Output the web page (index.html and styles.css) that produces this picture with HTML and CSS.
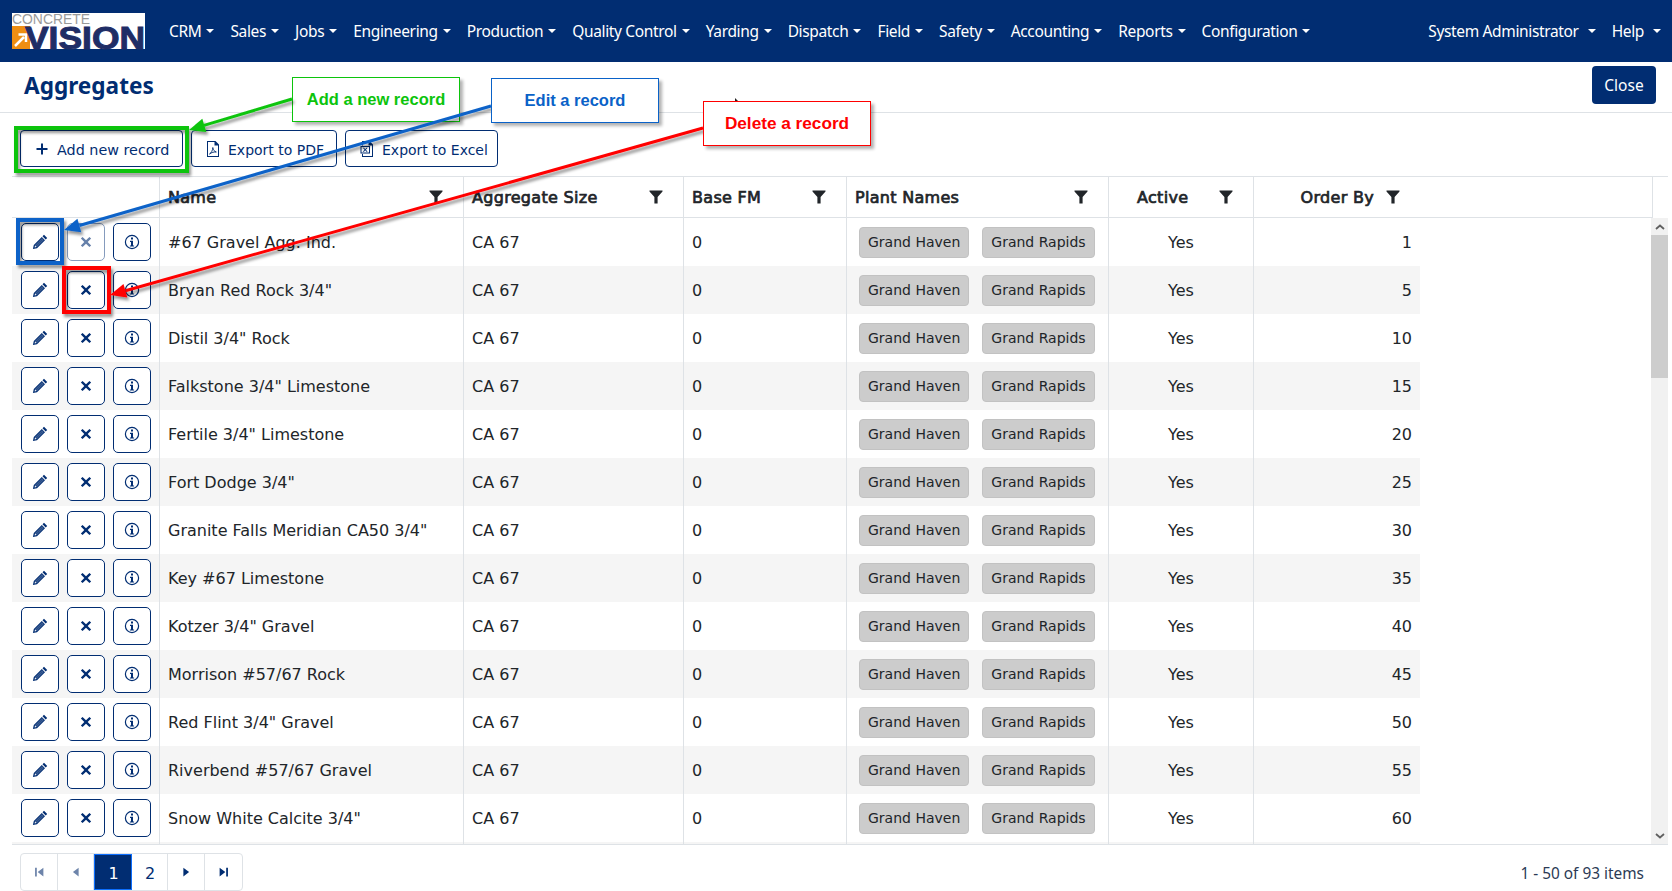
FILE: index.html
```html
<!DOCTYPE html>
<html lang="en">
<head>
<meta charset="utf-8">
<title>Aggregates</title>
<link rel="stylesheet" href="styles.css">
</head>
<body>
<svg class="defs" width="0" height="0" aria-hidden="true">
  <symbol id="i-pencil" viewBox="0 0 16 16"><path d="M12 .8 15.200 4 13.700 5.500 10.500 2.300zM9.800 3 13 6.200 5 14.200 .9 15.100 1.800 11zM3 11.500l-.4 1.900 1.900-.4 7-7-1.500-1.500z" fill-rule="evenodd"/><path d="M3 11.500 10 4.500 11.500 6 4.500 13z" opacity=".85"/></symbol>
  <symbol id="i-x" viewBox=".5 .5 15 15"><path d="M3.700 1.600 8 5.900l4.300-4.300 2.100 2.100L10.100 8l4.300 4.300-2.100 2.100L8 10.100l-4.300 4.300-2.100-2.100L5.900 8 1.600 3.700z"/></symbol>
  <symbol id="i-info" viewBox="0 0 16 16"><path d="M8 .8a7.200 7.200 0 1 0 0 14.400A7.200 7.200 0 0 0 8 .8zm0 1.200a6 6 0 1 1 0 12A6 6 0 0 1 8 2z" fill-rule="evenodd"/><path d="M7 3.600h2v2H7zM6 6.800h3v4.600h1.100v1.100H5.900v-1.100H7V7.900H6z"/></symbol>
  <symbol id="i-filter" viewBox="0 0 16 16"><path d="M1.500 1.500h13v1L9.600 8v6.500H6.400V8L1.500 2.500z"/></symbol>
  <symbol id="i-plus" viewBox="0 0 16 16"><path d="M7 2.500h2V7h4.500v2H9v4.500H7V9H2.500V7H7z"/></symbol>
  <symbol id="i-pdf" viewBox="0 0 16 16"><path d="M2 0h8.500L14 3.500V16H2zm1 1v14h10V4.500H9.500V1z" fill-rule="evenodd"/><path d="M4.500 13c1.500-.8 3.300-3.500 3.300-6.500.3 2.400 1.600 4 3.500 4.500-2.300-.2-4.600.4-6.800 2z" fill="none" stroke="currentColor" stroke-width=".9"/></symbol>
  <symbol id="i-xls" viewBox="0 0 16 16"><path d="M3 0h7.500L14 3.500V16H3v-3h1v2h9V4.500H9.500V1H4v3.500H3z" fill-rule="evenodd"/><path d="M2 5.500h8.500v6.500H2z" fill="#fff"/><path d="M1.500 5h9.500v7.500H1.500zm1 1v5.500h7.500V6z" fill-rule="evenodd"/><path d="M3.800 6.800h1.300l1.100 1.500 1.100-1.500h1.300L6.900 8.800l1.800 2H7.400L6.200 9.300 5 10.800H3.700l1.800-2z"/></symbol>
  <symbol id="i-first" viewBox="0 0 16 16"><path d="M3.500 3h2v10h-2zM13 3v10L6.500 8z"/></symbol>
  <symbol id="i-prev" viewBox="0 0 16 16"><path d="M11 3v10L4.500 8z"/></symbol>
  <symbol id="i-next" viewBox="0 0 16 16"><path d="M5 3v10l6.500-5z"/></symbol>
  <symbol id="i-last" viewBox="0 0 16 16"><path d="M10.500 3h2v10h-2zM3 3v10l6.500-5z"/></symbol>
</svg>

<nav class="navbar">
  <svg class="logo" viewBox="0 0 133 36" width="133" height="36" role="img" aria-label="Concrete Vision">
    <rect width="133" height="36" fill="#fff"/>
    <rect x="0" y="13" width="18" height="23" fill="#ee8e12"/>
    <path d="M3 33 12 24M6.500 21.500H14V29" fill="none" stroke="#fff" stroke-width="2.500"/>
    <text x="0" y="10.500" class="logo-top" textLength="78" lengthAdjust="spacingAndGlyphs">CONCRETE</text>
    <text x="13" y="35.500" class="logo-main" textLength="120" lengthAdjust="spacingAndGlyphs">VISION</text>
  </svg>
  <ul class="menu">
    <li class="menu-item">CRM</li>
    <li class="menu-item">Sales</li>
    <li class="menu-item">Jobs</li>
    <li class="menu-item">Engineering</li>
    <li class="menu-item">Production</li>
    <li class="menu-item">Quality Control</li>
    <li class="menu-item">Yarding</li>
    <li class="menu-item">Dispatch</li>
    <li class="menu-item">Field</li>
    <li class="menu-item">Safety</li>
    <li class="menu-item">Accounting</li>
    <li class="menu-item">Reports</li>
    <li class="menu-item">Configuration</li>
  </ul>
  <ul class="menu menu-right">
    <li class="menu-item menu-item-wide">System Administrator</li>
    <li class="menu-item menu-item-wide">Help</li>
  </ul>
</nav>

<header class="titlebar">
  <h1 class="page-title">Aggregates</h1>
  <button class="close-btn">Close</button>
</header>

<div class="toolbar">
  <button class="tool-btn tool-add"><svg class="ico-16"><use href="#i-plus"/></svg><span class="btn-label">Add new record</span></button>
  <button class="tool-btn tool-pdf"><svg class="ico-16"><use href="#i-pdf"/></svg><span class="btn-label">Export to PDF</span></button>
  <button class="tool-btn tool-xls"><svg class="ico-16"><use href="#i-xls"/></svg><span class="btn-label">Export to Excel</span></button>
</div>

<section class="grid">
  <table class="head-table">
    <colgroup><col class="c1"><col class="c2"><col class="c3"><col class="c4"><col class="c5"><col class="c6"><col class="c7"><col class="c8"></colgroup>
    <thead>
      <tr>
        <th></th>
        <th><div class="th-inner"><span>Name</span><svg class="ico-filter"><use href="#i-filter"/></svg></div></th>
        <th><div class="th-inner"><span>Aggregate Size</span><svg class="ico-filter"><use href="#i-filter"/></svg></div></th>
        <th><div class="th-inner"><span>Base FM</span><svg class="ico-filter"><use href="#i-filter"/></svg></div></th>
        <th><div class="th-inner"><span>Plant Names</span><svg class="ico-filter"><use href="#i-filter"/></svg></div></th>
        <th><div class="th-inner th-active"><span>Active</span><svg class="ico-filter"><use href="#i-filter"/></svg></div></th>
        <th><div class="th-inner th-order"><span>Order By</span><svg class="ico-filter"><use href="#i-filter"/></svg></div></th>
        <th></th>
      </tr>
    </thead>
  </table>
  <div class="grid-body">
    <div class="rows">
      <table class="body-table">
        <colgroup><col class="c1"><col class="c2"><col class="c3"><col class="c4"><col class="c5"><col class="c6"><col class="c7"></colgroup>
        <tbody>
          <tr><td class="acts"><button class="act"><svg class="ico-16"><use href="#i-pencil"/></svg></button><button class="act act-faded"><svg class="ico-12"><use href="#i-x"/></svg></button><button class="act"><svg class="ico-16"><use href="#i-info"/></svg></button></td><td>#67 Gravel Agg. Ind.</td><td>CA 67</td><td>0</td><td><span class="chip">Grand Haven</span><span class="chip">Grand Rapids</span></td><td class="ctr">Yes</td><td class="num">1</td></tr>
          <tr><td class="acts"><button class="act"><svg class="ico-16"><use href="#i-pencil"/></svg></button><button class="act"><svg class="ico-12"><use href="#i-x"/></svg></button><button class="act"><svg class="ico-16"><use href="#i-info"/></svg></button></td><td>Bryan Red Rock 3/4"</td><td>CA 67</td><td>0</td><td><span class="chip">Grand Haven</span><span class="chip">Grand Rapids</span></td><td class="ctr">Yes</td><td class="num">5</td></tr>
          <tr><td class="acts"><button class="act"><svg class="ico-16"><use href="#i-pencil"/></svg></button><button class="act"><svg class="ico-12"><use href="#i-x"/></svg></button><button class="act"><svg class="ico-16"><use href="#i-info"/></svg></button></td><td>Distil 3/4" Rock</td><td>CA 67</td><td>0</td><td><span class="chip">Grand Haven</span><span class="chip">Grand Rapids</span></td><td class="ctr">Yes</td><td class="num">10</td></tr>
          <tr><td class="acts"><button class="act"><svg class="ico-16"><use href="#i-pencil"/></svg></button><button class="act"><svg class="ico-12"><use href="#i-x"/></svg></button><button class="act"><svg class="ico-16"><use href="#i-info"/></svg></button></td><td>Falkstone 3/4" Limestone</td><td>CA 67</td><td>0</td><td><span class="chip">Grand Haven</span><span class="chip">Grand Rapids</span></td><td class="ctr">Yes</td><td class="num">15</td></tr>
          <tr><td class="acts"><button class="act"><svg class="ico-16"><use href="#i-pencil"/></svg></button><button class="act"><svg class="ico-12"><use href="#i-x"/></svg></button><button class="act"><svg class="ico-16"><use href="#i-info"/></svg></button></td><td>Fertile 3/4" Limestone</td><td>CA 67</td><td>0</td><td><span class="chip">Grand Haven</span><span class="chip">Grand Rapids</span></td><td class="ctr">Yes</td><td class="num">20</td></tr>
          <tr><td class="acts"><button class="act"><svg class="ico-16"><use href="#i-pencil"/></svg></button><button class="act"><svg class="ico-12"><use href="#i-x"/></svg></button><button class="act"><svg class="ico-16"><use href="#i-info"/></svg></button></td><td>Fort Dodge 3/4"</td><td>CA 67</td><td>0</td><td><span class="chip">Grand Haven</span><span class="chip">Grand Rapids</span></td><td class="ctr">Yes</td><td class="num">25</td></tr>
          <tr><td class="acts"><button class="act"><svg class="ico-16"><use href="#i-pencil"/></svg></button><button class="act"><svg class="ico-12"><use href="#i-x"/></svg></button><button class="act"><svg class="ico-16"><use href="#i-info"/></svg></button></td><td>Granite Falls Meridian CA50 3/4"</td><td>CA 67</td><td>0</td><td><span class="chip">Grand Haven</span><span class="chip">Grand Rapids</span></td><td class="ctr">Yes</td><td class="num">30</td></tr>
          <tr><td class="acts"><button class="act"><svg class="ico-16"><use href="#i-pencil"/></svg></button><button class="act"><svg class="ico-12"><use href="#i-x"/></svg></button><button class="act"><svg class="ico-16"><use href="#i-info"/></svg></button></td><td>Key #67 Limestone</td><td>CA 67</td><td>0</td><td><span class="chip">Grand Haven</span><span class="chip">Grand Rapids</span></td><td class="ctr">Yes</td><td class="num">35</td></tr>
          <tr><td class="acts"><button class="act"><svg class="ico-16"><use href="#i-pencil"/></svg></button><button class="act"><svg class="ico-12"><use href="#i-x"/></svg></button><button class="act"><svg class="ico-16"><use href="#i-info"/></svg></button></td><td>Kotzer 3/4" Gravel</td><td>CA 67</td><td>0</td><td><span class="chip">Grand Haven</span><span class="chip">Grand Rapids</span></td><td class="ctr">Yes</td><td class="num">40</td></tr>
          <tr><td class="acts"><button class="act"><svg class="ico-16"><use href="#i-pencil"/></svg></button><button class="act"><svg class="ico-12"><use href="#i-x"/></svg></button><button class="act"><svg class="ico-16"><use href="#i-info"/></svg></button></td><td>Morrison #57/67 Rock</td><td>CA 67</td><td>0</td><td><span class="chip">Grand Haven</span><span class="chip">Grand Rapids</span></td><td class="ctr">Yes</td><td class="num">45</td></tr>
          <tr><td class="acts"><button class="act"><svg class="ico-16"><use href="#i-pencil"/></svg></button><button class="act"><svg class="ico-12"><use href="#i-x"/></svg></button><button class="act"><svg class="ico-16"><use href="#i-info"/></svg></button></td><td>Red Flint 3/4" Gravel</td><td>CA 67</td><td>0</td><td><span class="chip">Grand Haven</span><span class="chip">Grand Rapids</span></td><td class="ctr">Yes</td><td class="num">50</td></tr>
          <tr><td class="acts"><button class="act"><svg class="ico-16"><use href="#i-pencil"/></svg></button><button class="act"><svg class="ico-12"><use href="#i-x"/></svg></button><button class="act"><svg class="ico-16"><use href="#i-info"/></svg></button></td><td>Riverbend #57/67 Gravel</td><td>CA 67</td><td>0</td><td><span class="chip">Grand Haven</span><span class="chip">Grand Rapids</span></td><td class="ctr">Yes</td><td class="num">55</td></tr>
          <tr><td class="acts"><button class="act"><svg class="ico-16"><use href="#i-pencil"/></svg></button><button class="act"><svg class="ico-12"><use href="#i-x"/></svg></button><button class="act"><svg class="ico-16"><use href="#i-info"/></svg></button></td><td>Snow White Calcite 3/4"</td><td>CA 67</td><td>0</td><td><span class="chip">Grand Haven</span><span class="chip">Grand Rapids</span></td><td class="ctr">Yes</td><td class="num">60</td></tr>
          <tr class="row-cut"><td></td><td></td><td></td><td></td><td></td><td></td><td></td></tr>
        </tbody>
      </table>
    </div>
    <div class="scrollbar">
      <span class="sb-btn"><svg viewBox="0 0 10 6" width="10" height="6"><path d="M1 5 5 1.500 9 5" fill="none" stroke="#606060" stroke-width="1.800"/></svg></span>
      <span class="sb-thumb"></span>
      <span class="sb-space"></span>
      <span class="sb-btn"><svg viewBox="0 0 10 6" width="10" height="6"><path d="M1 1 5 4.500 9 1" fill="none" stroke="#606060" stroke-width="1.800"/></svg></span>
    </div>
  </div>
  <footer class="pager-row">
    <div class="pager">
      <span class="pg pg-off"><svg class="ico-14"><use href="#i-first"/></svg></span>
      <span class="pg pg-off"><svg class="ico-14"><use href="#i-prev"/></svg></span>
      <span class="pg pg-on"><span class="pg-num">1</span></span>
      <span class="pg"><span class="pg-num">2</span></span>
      <span class="pg"><svg class="ico-14"><use href="#i-next"/></svg></span>
      <span class="pg"><svg class="ico-14"><use href="#i-last"/></svg></span>
    </div>
    <div class="pager-info">1 - 50 of 93 items</div>
  </footer>
</section>

<div class="note note-green">Add a new record</div>
<svg class="overlay" viewBox="0 0 1672 891" width="1672" height="891" aria-hidden="true">
  <defs>
    <filter id="sh" x="-5%" y="-5%" width="110%" height="110%"><feDropShadow dx="2" dy="3" stdDeviation="1.500" flood-color="#000" flood-opacity=".42"/></filter>
  </defs>
  <path d="M735 98v4h4z" fill="#222"/>
  <g filter="url(#sh)">
    <rect x="16" y="128" width="171" height="43" fill="none" stroke="#0cc40c" stroke-width="4"/>
    <path d="M292 99 204 125.400" stroke="#0cc40c" stroke-width="3" fill="none"/>
    <path d="M189 130 202.300 118.700 206.300 132.100z" fill="#0cc40c"/>
    <rect x="18" y="220" width="44" height="43" fill="none" stroke="#0a62c8" stroke-width="4"/>
    <path d="M491 106 79.400 225.500" stroke="#0a62c8" stroke-width="3" fill="none"/>
    <path d="M64 230 77.400 218.800 81.300 232.200z" fill="#0a62c8"/>
    <rect x="64" y="268" width="45" height="44" fill="none" stroke="#f00" stroke-width="4"/>
    <path d="M703 128 125.400 290.700" stroke="#f00" stroke-width="3" fill="none"/>
    <path d="M110 295 123.500 284 127.300 297.400z" fill="#f00"/>
  </g>
</svg>
<div class="note note-blue">Edit a record</div>
<div class="note note-red">Delete a record</div>
</body>
</html>
```
FILE: styles.css
```css
* { box-sizing: border-box; }
html, body { margin: 0; padding: 0; }
body {
  width: 1672px;
  height: 891px;
  overflow: hidden;
  position: relative;
  display: flex;
  flex-direction: column;
  background: #fff;
  color: #212529;
  font-family: "DejaVu Sans", sans-serif;
  font-size: 16px;
}
.defs { position: absolute; }
svg { fill: currentColor; }

/* navbar */
.navbar {
  height: 62px;
  flex: none;
  display: flex;
  align-items: center;
  background: #012d72;
  color: #fff;
  padding-left: 12px;
  font-family: "Noto Sans", sans-serif;
  font-size: 15.5px;
  letter-spacing: -.35px;
}
.logo { flex: none; display: block; margin-right: 24px; margin-top: -1px; overflow: visible; }
.logo-top { font: 400 14px "Liberation Sans", sans-serif; letter-spacing: 0; fill: #9a9a9a; }
.logo-main { font: 700 32px "Liberation Sans", sans-serif; letter-spacing: 0; fill: #1f2d66; stroke: #1f2d66; stroke-width: 1px; }
.menu { list-style: none; display: flex; margin: 0; padding: 0; gap: 16px; }
.menu-right { margin-left: auto; padding-right: 11px; gap: 16px; }
.menu-item { display: flex; align-items: center; white-space: nowrap; }
.menu-item::after {
  content: "";
  margin-left: 5px;
  border-top: 4.500px solid #fff;
  border-left: 4.500px solid transparent;
  border-right: 4.500px solid transparent;
}
.menu-item-wide::after { margin-left: 9px; }

/* title */
.titlebar {
  height: 51px;
  flex: none;
  display: flex;
  align-items: center;
  justify-content: space-between;
  border-bottom: 1px solid #dee2e6;
  padding: 0 16px 4px 24px;
}
.page-title {
  margin: 0;
  font: 700 22.600px "Noto Sans", sans-serif;
  color: #012d72;
}
.close-btn {
  width: 64px;
  height: 38px;
  border: 0;
  border-radius: 4px;
  background: #012d72;
  color: #fff;
  font: 400 15.500px "Noto Sans", sans-serif;
  padding: 0;
}

/* toolbar */
.toolbar {
  height: 63px;
  flex: none;
  display: flex;
  gap: 8px;
  padding: 17px 0 0 20px;
}
.tool-btn {
  height: 37px;
  display: flex;
  align-items: center;
  gap: 7px;
  background: #fff;
  border: 1px solid #012d72;
  border-radius: 4px;
  color: #012d72;
  font: 400 14px "DejaVu Sans", sans-serif;
  padding: 0 0 0 13px;
  white-space: nowrap;
}
.btn-label { padding-top: 3px; }
.tool-add { width: 163px; font-size: 14.350px; }
.tool-pdf { width: 146px; }
.tool-xls { width: 153px; }
.ico-16 { width: 16px; height: 16px; flex: none; display: block; }
.ico-14 { width: 14px; height: 14px; flex: none; display: block; }
.ico-12 { width: 12px; height: 12px; flex: none; display: block; }

/* grid */
.grid {
  margin: 0 4px 0 12px;
  border-top: 1px solid #dee2e6;
  flex: 1;
  display: flex;
  flex-direction: column;
  min-height: 0;
}
table { border-collapse: separate; border-spacing: 0; table-layout: fixed; }
.c1 { width: 148px; }
.c2 { width: 304px; }
.c3 { width: 220px; }
.c4 { width: 163px; }
.c5 { width: 262px; }
.c6 { width: 145px; }
.c7 { width: 166px; }
.c8 { width: 233px; }
.head-table { width: 1641px; }
.body-table { width: 1408px; }
.head-table th {
  height: 41px;
  padding: 0 8px;
  border-bottom: 1px solid #dee2e6;
  border-right: 1px solid #dee2e6;
  font-weight: 400;
  font-size: 16px;
  letter-spacing: .3px;
  text-align: left;
  -webkit-text-stroke: .7px #212529;
}
.head-table th:nth-child(7) { border-right: 0; }
.th-inner { display: flex; align-items: center; justify-content: space-between; padding-right: 11px; }
.th-active { padding-left: 20px; }
.th-order { justify-content: flex-end; gap: 11px; padding-right: 11px; }
.ico-filter { width: 16px; height: 16px; flex: none; color: #212529; }
.grid-body { height: 626px; flex: none; display: flex; overflow: hidden; }
.rows { width: 1639px; overflow: hidden; }
.body-table td {
  height: 48px;
  padding: 0 8px;
  border-right: 1px solid #dee2e6;
  white-space: nowrap;
}
.body-table td:last-child { border-right: 0; }
.body-table tr:nth-child(even) td { background: #f5f5f5; }
.acts { font-size: 0; }
.body-table td.acts { padding: 0 0 0 9px; }
.act {
  width: 38px;
  height: 38px;
  display: inline-flex;
  align-items: center;
  justify-content: center;
  margin-right: 8px;
  padding: 0;
  background: #fff;
  border: 1px solid #012d72;
  border-radius: 5px;
  color: #012d72;
  vertical-align: middle;
}
.act-faded { opacity: .6; border-color: #355a92; }
.chip {
  display: inline-block;
  height: 31px;
  line-height: 29px;
  margin: 0 9px 0 4px;
  padding: 0 8px;
  background: #ccc;
  border: 1px solid #c2c2c2;
  border-radius: 4px;
  font-size: 14px;
  vertical-align: middle;
}
.ctr { text-align: center; }
.num { text-align: right; }
.scrollbar {
  width: 17px;
  flex: none;
  display: flex;
  flex-direction: column;
  background: #f1f1f1;
}
.sb-btn { height: 17px; flex: none; display: flex; align-items: center; justify-content: center; }
.sb-thumb { height: 143px; flex: none; background: #cdcdcd; }
.sb-space { flex: 1; }
.pager-row {
  flex: 1;
  display: flex;
  justify-content: space-between;
  align-items: flex-start;
  border-top: 1px solid #dee2e6;
  padding: 8px 24px 0 8px;
}
.pager {
  display: flex;
  height: 38px;
  border: 1px solid #dee2e6;
  border-radius: 4px;
  overflow: hidden;
}
.pg {
  width: 37px;
  display: flex;
  align-items: center;
  justify-content: center;
  color: #012d72;
  border-right: 1px solid #dee2e6;
}
.pg:nth-child(2), .pg:nth-child(4) { width: 36px; }
.pg:last-child { border-right: 0; }
.pg-off { color: #6d84aa; }
.pg.pg-on { width: 38px; background: #012d72; color: #fff; border: 1px solid #0d6efd; }
.pg-num { padding-top: 2px; padding-left: 1px; }
.pager-info { font: 400 15.400px "Noto Sans", sans-serif; line-height: 38px; padding-top: 2px; color: #2b3a55; }

/* annotations */
.overlay { position: absolute; left: 0; top: 0; z-index: 2; pointer-events: none; }
.note {
  position: absolute;
  width: 168px;
  height: 45px;
  display: flex;
  align-items: center;
  justify-content: center;
  background: #fff;
  border: 1.500px solid;
  font: 700 16.500px "Liberation Sans", sans-serif;
  box-shadow: 3px 3px 3px rgba(0,0,0,.3);
}
.note-green { left: 292px; top: 77px; color: #0cc40c; border-color: #0cc40c; border-width: 1px; z-index: 1; }
.note-blue { left: 491px; top: 78px; color: #0a62c8; border-color: #0a62c8; z-index: 3; }
.note-red { left: 703px; top: 101px; font-size: 17.200px; color: #f00; border-color: #f00; z-index: 3; }
```
